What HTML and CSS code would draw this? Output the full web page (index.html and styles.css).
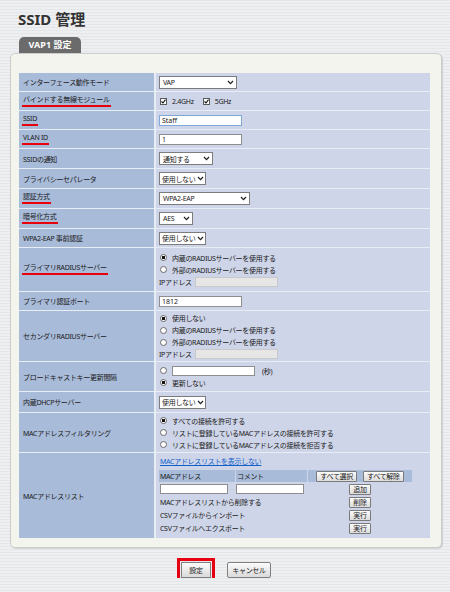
FILE: index.html
```html
<!DOCTYPE html>
<html lang="ja">
<head>
<meta charset="utf-8">
<title>SSID 管理</title>
<link rel="stylesheet" href="styles.css">
</head>
<body>
<div class="page">
  <h1 class="title">SSID 管理</h1>
  <div class="tab">VAP1 設定</div>
  <div class="panel">
    <div class="form">
      <div class="lbl">インターフェース動作モード</div>
      <div class="val"><span class="sel sel-mode">VAP<svg class="chev" viewBox="0 0 7 5" width="7" height="5"><path d="M1 1 L3.5 3.6 L6 1" /></svg></span></div>

      <div class="lbl"><span class="req">バインドする無線モジュール</span></div>
      <div class="val"><div class="line">
        <svg class="chk" viewBox="0 0 7 7" width="7" height="7"><rect x="0.5" y="0.5" width="6" height="6"/><path d="M1.5 3.5 L3 5 L5.5 1.7"/></svg><span class="chk-label">2.4GHz</span>
        <svg class="chk" viewBox="0 0 7 7" width="7" height="7"><rect x="0.5" y="0.5" width="6" height="6"/><path d="M1.5 3.5 L3 5 L5.5 1.7"/></svg><span class="chk-label">5GHz</span>
      </div></div>

      <div class="lbl"><span class="req">SSID</span></div>
      <div class="val"><input class="txt txt-focus" type="text" value="Staff"></div>

      <div class="lbl"><span class="req">VLAN ID</span></div>
      <div class="val"><input class="txt" type="text" value="1"></div>

      <div class="lbl">SSIDの通知</div>
      <div class="val"><span class="sel sel-notify">通知する<svg class="chev" viewBox="0 0 7 5" width="7" height="5"><path d="M1 1 L3.5 3.6 L6 1" /></svg></span></div>

      <div class="lbl">プライバシーセパレータ</div>
      <div class="val"><span class="sel sel-use">使用しない<svg class="chev" viewBox="0 0 7 5" width="7" height="5"><path d="M1 1 L3.5 3.6 L6 1" /></svg></span></div>

      <div class="lbl"><span class="req">認証方式</span></div>
      <div class="val"><span class="sel sel-auth">WPA2-EAP<svg class="chev" viewBox="0 0 7 5" width="7" height="5"><path d="M1 1 L3.5 3.6 L6 1" /></svg></span></div>

      <div class="lbl"><span class="req">暗号化方式</span></div>
      <div class="val"><span class="sel sel-enc">AES<svg class="chev" viewBox="0 0 7 5" width="7" height="5"><path d="M1 1 L3.5 3.6 L6 1" /></svg></span></div>

      <div class="lbl">WPA2-EAP 事前認証</div>
      <div class="val"><span class="sel sel-use">使用しない<svg class="chev" viewBox="0 0 7 5" width="7" height="5"><path d="M1 1 L3.5 3.6 L6 1" /></svg></span></div>

      <div class="lbl"><span class="req">プライマリRADIUSサーバー</span></div>
      <div class="val">
        <div class="line"><span class="radio on"></span>内蔵のRADIUSサーバーを使用する</div>
        <div class="line"><span class="radio"></span>外部のRADIUSサーバーを使用する</div>
        <div class="line">IPアドレス<input class="txt txt-ip" type="text" disabled></div>
      </div>

      <div class="lbl">プライマリ認証ポート</div>
      <div class="val"><input class="txt" type="text" value="1812"></div>

      <div class="lbl">セカンダリRADIUSサーバー</div>
      <div class="val">
        <div class="line"><span class="radio on"></span>使用しない</div>
        <div class="line"><span class="radio"></span>内蔵のRADIUSサーバーを使用する</div>
        <div class="line"><span class="radio"></span>外部のRADIUSサーバーを使用する</div>
        <div class="line">IPアドレス<input class="txt txt-ip" type="text" disabled></div>
      </div>

      <div class="lbl">ブロードキャストキー更新間隔</div>
      <div class="val">
        <div class="line"><span class="radio"></span><input class="txt txt-sec" type="text"><span class="unit">(秒)</span></div>
        <div class="line"><span class="radio on"></span>更新しない</div>
      </div>

      <div class="lbl">内蔵DHCPサーバー</div>
      <div class="val"><span class="sel sel-use">使用しない<svg class="chev" viewBox="0 0 7 5" width="7" height="5"><path d="M1 1 L3.5 3.6 L6 1" /></svg></span></div>

      <div class="lbl">MACアドレスフィルタリング</div>
      <div class="val">
        <div class="line"><span class="radio on"></span>すべての接続を許可する</div>
        <div class="line"><span class="radio"></span>リストに登録しているMACアドレスの接続を許可する</div>
        <div class="line"><span class="radio"></span>リストに登録しているMACアドレスの接続を拒否する</div>
      </div>

      <div class="lbl">MACアドレスリスト</div>
      <div class="val val-mac">
        <a class="link" href="#">MACアドレスリストを表示しない</a>
        <div class="maclist">
          <div class="mh">MACアドレス</div>
          <div class="mh">コメント</div>
          <div class="mh mbtns"><button class="sbtn">すべて選択</button><button class="sbtn">すべて解除</button></div>

          <div class="mc"><input class="txt txt-mac" type="text"></div>
          <div class="mc"><input class="txt txt-mac txt-mac2" type="text"></div>
          <div class="mbtns"><button class="sbtn">追加</button></div>

          <div class="mspan">MACアドレスリストから削除する</div>
          <div class="mbtns"><button class="sbtn">削除</button></div>

          <div class="mspan">CSVファイルからインポート</div>
          <div class="mbtns"><button class="sbtn">実行</button></div>

          <div class="mspan">CSVファイルへエクスポート</div>
          <div class="mbtns"><button class="sbtn">実行</button></div>
        </div>
      </div>
    </div>
  </div>
  <div class="actions">
    <button class="btn btn-main">設定</button>
    <button class="btn btn-cancel">キャンセル</button>
  </div>
</div>
</body>
</html>
```

FILE: styles.css
```css
html {
  background: repeating-linear-gradient(to bottom, #e5e6e9 0, #e5e6e9 1px, #eeeff1 1px, #eeeff1 3px);
}
body {
  margin: 0;
  font-family: "Noto Sans", "Noto Sans CJK JP", sans-serif;
  font-size: 7px;
  color: #1a1a1a;
  letter-spacing: -0.3px;
}
.page {
  padding: 10px 8px 0 10px;
}
.title {
  margin: 0 0 0 8px;
  font-size: 15px;
  line-height: 18px;
  font-weight: 700;
  color: #333;
  letter-spacing: 0;
}
.tab {
  margin: 9px 0 0 9px;
  width: 62px;
  height: 16px;
  background: #6b6b6b;
  color: #fff;
  font-weight: 700;
  font-size: 9px;
  line-height: 16px;
  text-align: center;
  border-radius: 5px 5px 0 0;
  letter-spacing: 0;
}
.panel {
  width: 432px;
  box-sizing: border-box;
  border: 1px solid #cdcdcd;
  border-radius: 5px;
  background: #f4f4ef;
  padding: 19px 11px 9px 8px;
  box-shadow: 1px 1px 1px rgba(0, 0, 0, 0.12);
}
.form {
  display: grid;
  grid-template-columns: 135px 274px;
  grid-template-rows: 18px 18px 18px 18px 19px 19px 19px 19px 18px 43px 18px 50px 29px 20px 39px 85px;
  gap: 1px 2px;
  background: #e8ecf4;
}
.lbl {
  display: flex;
  align-items: center;
  padding-left: 3px;
  background: #a8bbd8;
  white-space: nowrap;
}
.lbl:not(:has(.req)) {
  padding-left: 4px;
}
.req {
  display: inline-block;
  line-height: 8px;
  padding: 0 1px 1px;
  border-bottom: 2px solid #e8000b;
}
.val {
  display: flex;
  flex-direction: column;
  justify-content: center;
  align-items: flex-start;
  padding-left: 3px;
  background: #ced5e8;
}
.line {
  display: flex;
  align-items: center;
  height: 12px;
  white-space: nowrap;
}
.sel {
  display: inline-flex;
  align-items: center;
  justify-content: space-between;
  box-sizing: border-box;
  height: 13px;
  padding: 0 2px 0 3px;
  border: 1px solid #7c7c7c;
  background: #fff;
  white-space: nowrap;
}
.sel-mode { width: 78px; }
.sel-notify { width: 54px; }
.sel-use { width: 47px; padding-left: 2px; }
.sel-auth { width: 91px; }
.sel-enc { width: 34px; }
.chev {
  flex: none;
  margin-left: 1px;
}
.chev path {
  fill: none;
  stroke: #222;
  stroke-width: 1.3;
}
.chk {
  flex: none;
  margin-left: 1px;
}
.chk rect {
  fill: #fff;
  stroke: #5a5a5a;
}
.chk path {
  fill: none;
  stroke: #111;
  stroke-width: 1.1;
}
.chk-label {
  margin: 0 8px 0 5px;
}
.txt {
  box-sizing: border-box;
  width: 83px;
  height: 11px;
  margin: 0;
  padding: 0 2px;
  border: 1px solid #8e8e8e;
  background: #fff;
  font: inherit;
  font-size: 7px;
  color: #1a1a1a;
  outline: none;
}
.txt-focus {
  border-color: #7fa8d8;
}
.txt-ip {
  margin-left: 3px;
  height: 10px;
  background: #e6e6e6;
  border-color: #c9c9c9;
}
.txt-sec {
  height: 10px;
}
.unit {
  margin-left: 7px;
}
.radio {
  flex: none;
  box-sizing: border-box;
  width: 7px;
  height: 7px;
  margin: 0 5px 0 1px;
  border: 1px solid #6a6a6a;
  border-radius: 50%;
  background: #fff;
}
.radio.on {
  background: radial-gradient(circle, #111 0, #111 1.4px, #fff 1.9px);
}
.val-mac {
  justify-content: flex-start;
  padding-top: 3px;
}
.link {
  display: block;
  height: 12px;
  line-height: 12px;
  margin: 0 0 2px 1px;
  color: #1060c8;
  text-decoration: underline;
  white-space: nowrap;
}
.maclist {
  display: grid;
  grid-template-columns: 76px 71px 104px;
  grid-auto-rows: 12px;
  gap: 1px 1px;
}
.mh {
  display: flex;
  align-items: center;
  padding-left: 1px;
  background: #a8bbd8;
}
.mc {
  display: flex;
  align-items: center;
}
.txt-mac {
  width: 68px;
  height: 10px;
  margin-left: 1px;
}
.txt-mac2 {
  margin-left: 0;
}
.mspan {
  grid-column: 1 / 3;
  display: flex;
  align-items: center;
  padding-left: 1px;
  white-space: nowrap;
}
.mbtns {
  display: flex;
  align-items: center;
  justify-content: center;
  gap: 6px;
  padding-left: 0;
}
.sbtn {
  box-sizing: border-box;
  height: 11px;
  margin: 0;
  padding: 0 3px;
  border: 1px solid #7a7a7a;
  border-radius: 1px;
  background: linear-gradient(#fbfbfb, #dcdcdc);
  font: inherit;
  font-size: 7px;
  line-height: 9px;
  letter-spacing: -0.3px;
  color: #1a1a1a;
  white-space: nowrap;
}
.actions {
  display: flex;
  justify-content: center;
  gap: 16px;
  margin-top: 14px;
}
.btn {
  box-sizing: border-box;
  height: 16px;
  margin: 0;
  padding: 0;
  border: 1px solid #808080;
  border-radius: 2px;
  background: linear-gradient(#fbfbfb, #dadada);
  font: inherit;
  font-size: 7px;
  letter-spacing: -0.3px;
  color: #1a1a1a;
}
.btn-main {
  width: 30px;
  border-radius: 0;
  outline: 3px solid #e60012;
  outline-offset: 1px;
}
.btn-cancel {
  width: 44px;
}
```
